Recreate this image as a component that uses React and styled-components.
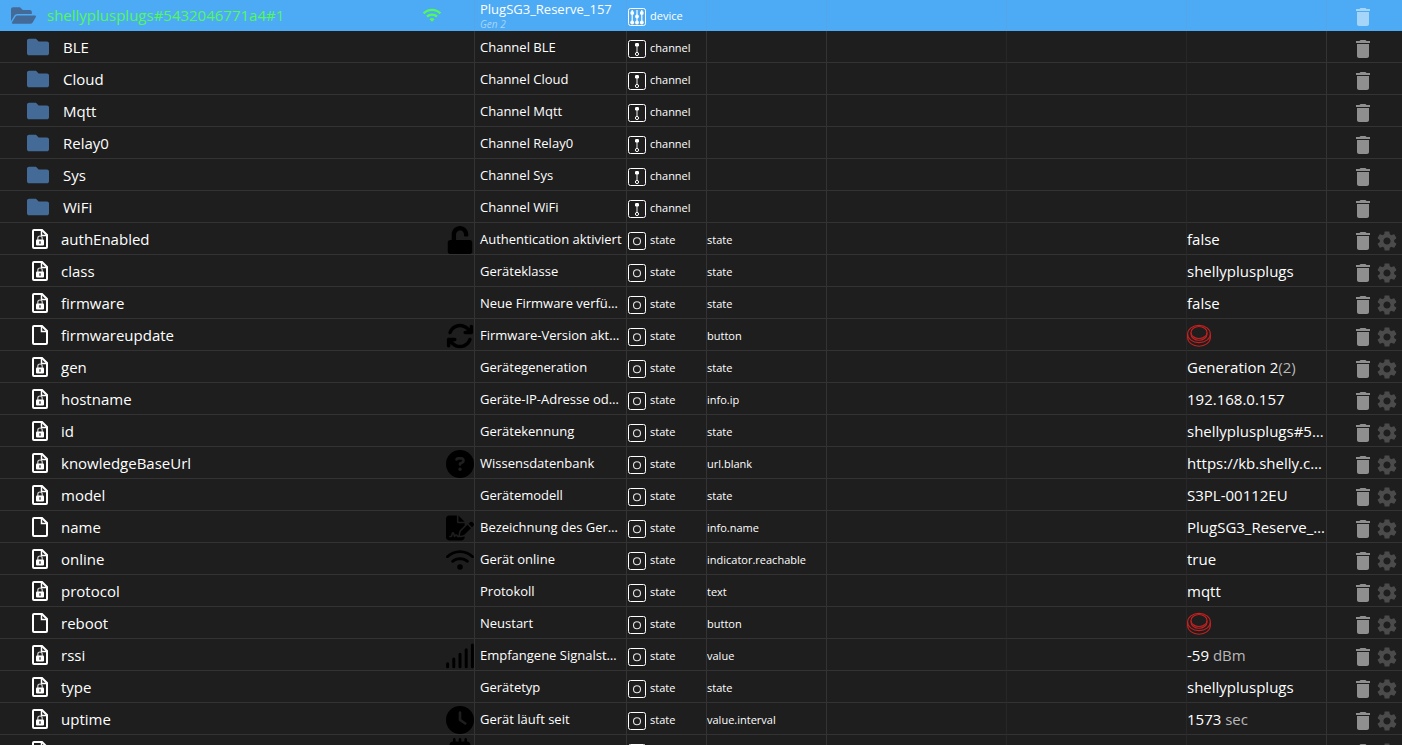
import React from "react";
import styled, { createGlobalStyle } from "styled-components";
import { FaFolder, FaFolderOpen, FaUnlock } from "react-icons/fa";
import {
  FaArrowsRotate,
  FaCircleQuestion,
  FaClock,
  FaFileSignature,
  FaMicrochip,
  FaWifi,
} from "react-icons/fa6";
import { MdDelete, MdSettings, MdWifi } from "react-icons/md";

const SignalIcon = ({ size }) => (
  <svg width={size} height={size} viewBox="0 0 28 28" fill="none" stroke="currentColor" strokeWidth="3" strokeLinecap="round" aria-hidden="true">
    <path d="M1.600 21.700v3M7.800 17v7.700M14 12.300v12.400M20.200 7.700v17M26.400 3v21.700" />
  </svg>
);

const channels = ["BLE", "Cloud", "Mqtt", "Relay0", "Sys", "WiFi"];

const states = [
  { id: "authEnabled", name: "Authentication aktiviert", role: "state", value: "false", icon: FaUnlock },
  { id: "class", name: "Geräteklasse", role: "state", value: "shellyplusplugs" },
  { id: "firmware", name: "Neue Firmware verfügbar", role: "state", value: "false" },
  { id: "firmwareupdate", name: "Firmware-Version aktual.", role: "button", writable: true, icon: FaArrowsRotate },
  { id: "gen", name: "Gerätegeneration", role: "state", value: "Generation 2", extra: "(2)" },
  { id: "hostname", name: "Geräte-IP-Adresse oder Host", role: "info.ip", value: "192.168.0.157" },
  { id: "id", name: "Gerätekennung", role: "state", value: "shellyplusplugs#5432046771a4#1" },
  { id: "knowledgeBaseUrl", name: "Wissensdatenbank", role: "url.blank", value: "https://kb.shelly.com/", icon: FaCircleQuestion },
  { id: "model", name: "Gerätemodell", role: "state", value: "S3PL-00112EU" },
  { id: "name", name: "Bezeichnung des Gerätes", role: "info.name", value: "PlugSG3_Reserve_157", writable: true, icon: FaFileSignature },
  { id: "online", name: "Gerät online", role: "indicator.reachable", value: "true", icon: FaWifi },
  { id: "protocol", name: "Protokoll", role: "text", value: "mqtt" },
  { id: "reboot", name: "Neustart", role: "button", writable: true },
  { id: "rssi", name: "Empfangene Signalstärke", role: "value", value: "-59", extra: " dBm", icon: SignalIcon },
  { id: "type", name: "Gerätetyp", role: "state", value: "shellyplusplugs" },
  { id: "uptime", name: "Gerät läuft seit", role: "value.interval", value: "1573", extra: " sec", icon: FaClock },
  { id: "version", name: "Firmware-Version", role: "state", value: "1.4.4", icon: FaMicrochip },
];

const FileIcon = ({ locked }) => (
  <svg width="16" height="20" viewBox="0 0 16 20" fill="none" aria-hidden="true">
    <path d="M2 1h8l5 5v12a1 1 0 0 1-1 1H2a1 1 0 0 1-1-1V2a1 1 0 0 1 1-1z" stroke="#fff" strokeWidth="2" />
    <path d="M9.500 1v5.500H15" stroke="#fff" strokeWidth="1.500" />
    {locked && (
      <>
        <path d="M5.800 11V9.200a2.200 2.200 0 0 1 4.400 0V11" stroke="#ccc" strokeWidth="1.200" />
        <rect x="4" y="10.500" width="8" height="6" rx="1" fill="#fff" />
        <path d="M8 12.300v2.400" stroke="#1e1e1e" strokeWidth="1.200" />
      </>
    )}
  </svg>
);

const TypeIcon = ({ type }) => (
  <svg width="18" height="18" viewBox="0 0 18 18" fill="none" stroke="#fff" aria-hidden="true">
    <rect x="0.500" y="0.500" width="17" height="17" rx="2" />
    {type === "state" && <circle cx="9" cy="9.200" r="3.500" stroke="#e4e4e4" strokeWidth="1.100" />}
    {type === "channel" && (
      <>
        <path d="M9 5v7.500" stroke="#aaa" strokeWidth="1.500" />
        <rect x="7" y="3" width="4" height="3.500" rx="1.200" fill="#fff" stroke="none" />
        <circle cx="9" cy="14" r="1.600" strokeWidth="1" />
      </>
    )}
    {type === "device" && (
      <>
        <path d="M4.200 2v11M9 2v11M13.800 2v11" strokeWidth="1.200" />
        <g fill="#fff" stroke="none">
          <circle cx="4.200" cy="5" r="1.900" />
          <circle cx="9" cy="8.500" r="1.900" />
          <circle cx="13.800" cy="5" r="1.900" />
          <circle cx="4.200" cy="14.500" r="1.900" />
          <circle cx="9" cy="14.500" r="1.900" />
          <circle cx="13.800" cy="14.500" r="1.900" />
        </g>
      </>
    )}
  </svg>
);

const PushIcon = () => (
  <svg width="24" height="24" viewBox="0 0 24 24" fill="none" stroke="#c62020" strokeWidth="1.100" aria-hidden="true">
    <ellipse cx="12" cy="9.500" rx="8" ry="6" />
    <ellipse cx="12" cy="11" rx="11.400" ry="8.600" />
    <path d="M4 9.500v1.800a8 6 0 0 0 16 0V9.500" />
    <path d="M.6 11v3.600a11.400 8.600 0 0 0 22.800 0V11" />
  </svg>
);

const RowButtons = ({ id, settings }) => (
  <Cell>
    <Actions>
      <ActionButton type="button" aria-label={`Delete ${id}`}>
        <MdDelete size={24} />
      </ActionButton>
      {settings && (
        <ActionButton type="button" $dim aria-label={`Settings of ${id}`}>
          <MdSettings size={24} />
        </ActionButton>
      )}
    </Actions>
  </Cell>
);

const TypeCell = ({ type }) => (
  <Cell>
    <TypeBox>
      <TypeIcon type={type} />
      <Small>{type}</Small>
    </TypeBox>
  </Cell>
);

const App = () => {
  return (
    <Page>
      <GlobalStyle />
      <Table>
        <colgroup>
          <col />
          <Col $width={152} />
          <Col $width={80} />
          <Col $width={120} />
          <Col $width={180} />
          <Col $width={180} />
          <Col $width={140} />
          <Col $width={75} />
        </colgroup>
        <tbody>
          <SelectedRow>
            <Cell>
              <IdBox $indent={10}>
                <FolderButton type="button" $width={27} aria-label="Collapse">
                  <FaFolderOpen size={25} />
                </FolderButton>
                <IdText $online $gap={10}>shellyplusplugs#5432046771a4#1</IdText>
                <OnlineMark>
                  <MdWifi size={20} />
                </OnlineMark>
              </IdBox>
            </Cell>
            <Cell>
              <DeviceName>PlugSG3_Reserve_157</DeviceName>
              <DeviceInfo>Gen 2</DeviceInfo>
            </Cell>
            <TypeCell type="device" />
            <Cell />
            <Cell $faint />
            <Cell $faint />
            <Cell />
            <RowButtons id="shellyplusplugs#5432046771a4#1" />
          </SelectedRow>
          {channels.map((id) => (
            <tr key={id}>
              <Cell>
                <IdBox $indent={26}>
                  <FolderButton type="button" $width={24} aria-label={`Expand ${id}`}>
                    <FaFolder size={22} />
                  </FolderButton>
                  <IdText $gap={13}>{id}</IdText>
                </IdBox>
              </Cell>
              <Cell>
                <Name>Channel {id}</Name>
              </Cell>
              <TypeCell type="channel" />
              <Cell />
              <Cell $faint />
              <Cell $faint />
              <Cell />
              <RowButtons id={id} />
            </tr>
          ))}
          {states.map(({ icon: Icon, ...state }) => (
            <tr key={state.id}>
              <Cell>
                <IdBox $indent={32}>
                  <FileIcon locked={!state.writable} />
                  <IdText $gap={13}>{state.id}</IdText>
                  {Icon && (
                    <StateMark>
                      <Icon size={28} />
                    </StateMark>
                  )}
                </IdBox>
              </Cell>
              <Cell>
                <Name>{state.name}</Name>
              </Cell>
              <TypeCell type="state" />
              <Cell>
                <Small>{state.role}</Small>
              </Cell>
              <Cell $faint />
              <Cell $faint />
              <Cell>
                {state.role === "button" ? (
                  <PushButton type="button" aria-label={state.name}>
                    <PushIcon />
                  </PushButton>
                ) : (
                  <Value>
                    {state.value}
                    {state.extra && <Extra>{state.extra}</Extra>}
                  </Value>
                )}
              </Cell>
              <RowButtons id={state.id} settings />
            </tr>
          ))}
        </tbody>
      </Table>
    </Page>
  );
};

const GlobalStyle = createGlobalStyle`
  * {
    box-sizing: border-box;
  }
  body {
    margin: 0;
    background: #1e1e1e;
    color: #fff;
    font-family: "Open Sans", "Noto Sans", sans-serif;
  }
  button {
    display: flex;
    align-items: center;
    padding: 0;
    border: none;
    background: none;
    cursor: pointer;
  }
`;

const Page = styled.main`
  height: 100vh;
  overflow: hidden;
`;

const Table = styled.table`
  width: 100%;
  table-layout: fixed;
  border-collapse: separate;
  border-spacing: 0;
`;

const Col = styled.col`
  width: ${(props) => props.$width}px;
`;

const Cell = styled.td`
  height: 32px;
  padding: 0;
  overflow: hidden;
  vertical-align: bottom;
  border-right: 1px solid ${(props) => (props.$faint ? "#272727" : "#333")};
  border-bottom: 1px solid #333;
  white-space: nowrap;
  &:last-child {
    border-right: none;
  }
`;

const SelectedRow = styled.tr`
  background: #4dabf5;
  ${Cell} {
    height: 31px;
    vertical-align: top;
    border-bottom: none;
    border-right-color: #55a6e6;
  }
`;

const IdBox = styled.div`
  display: flex;
  align-items: center;
  height: 30px;
  padding-left: ${(props) => props.$indent}px;
`;

const FolderButton = styled.button`
  justify-content: center;
  width: ${(props) => props.$width}px;
  color: #446b98;
`;

const IdText = styled.span`
  margin-left: ${(props) => props.$gap}px;
  font-size: 15px;
  line-height: 30px;
  color: ${(props) => (props.$online ? "#53f95a" : "#fff")};
`;

const OnlineMark = styled.span`
  display: flex;
  margin-left: auto;
  padding-right: 32px;
  color: #53f95a;
`;

const StateMark = styled.span`
  display: flex;
  margin-left: auto;
  padding-top: 2px;
  color: #000;
`;

const Name = styled.div`
  padding: 0 3px 0 5px;
  overflow: hidden;
  text-overflow: ellipsis;
  font-size: 13px;
  line-height: 30px;
`;

const DeviceName = styled.div`
  padding-left: 5px;
  font-size: 13px;
  line-height: 18px;
`;

const DeviceInfo = styled.div`
  padding-left: 5px;
  font-size: 10px;
  font-style: italic;
  line-height: 13px;
  color: #a6d5fa;
`;

const TypeBox = styled.div`
  display: flex;
  gap: 4px;
  height: 30px;
  padding-left: 1px;
  svg {
    margin-top: 8px;
  }
`;

const Small = styled.div`
  padding-top: 2px;
  font-size: 11px;
  line-height: 28px;
`;

const Value = styled.div`
  overflow: hidden;
  text-overflow: ellipsis;
  font-size: 15px;
  line-height: 30px;
`;

const Extra = styled.span`
  white-space: pre;
  color: #b8b8b8;
`;

const PushButton = styled.button`
  height: 30px;
`;

const Actions = styled.div`
  display: flex;
  padding: 5px 0 1px 24px;
`;

const ActionButton = styled.button`
  color: #fff;
  opacity: ${(props) => (props.$dim ? 0.2 : 0.5)};
`;

export default App;
